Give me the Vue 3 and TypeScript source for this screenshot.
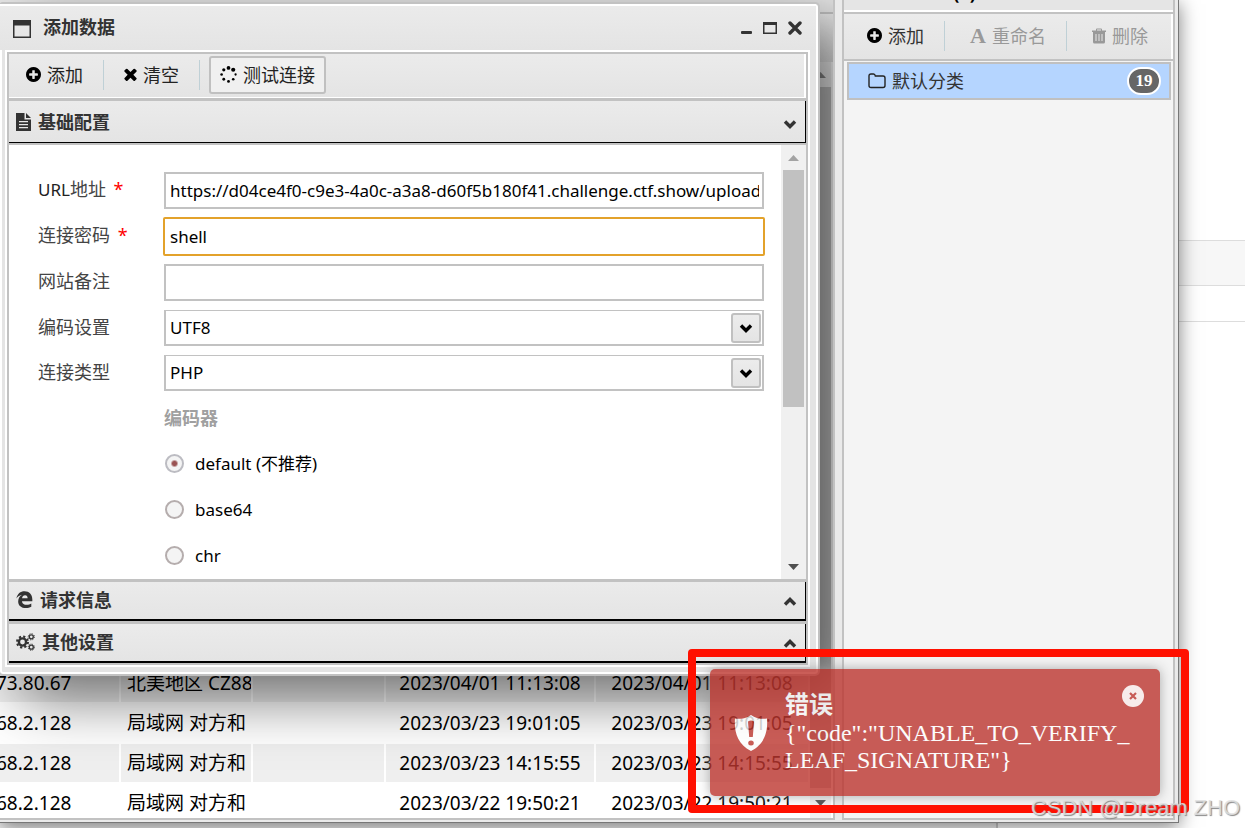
<script setup lang="ts">
import { ref } from 'vue'

interface ShellRow {
  ip: string
  place: string
  created: string
  updated: string
}

const blankRows = 15
const rows: ShellRow[] = [
  { ip: '73.80.67', place: '北美地区 CZ88', created: '2023/04/01 11:13:08', updated: '2023/04/01 11:13:08' },
  { ip: '68.2.128', place: '局域网 对方和', created: '2023/03/23 19:01:05', updated: '2023/03/23 19:01:05' },
  { ip: '68.2.128', place: '局域网 对方和', created: '2023/03/23 14:15:55', updated: '2023/03/23 14:15:55' },
  { ip: '68.2.128', place: '局域网 对方和', created: '2023/03/22 19:50:21', updated: '2023/03/22 19:50:21' },
]

const url = ref('https://d04ce4f0-c9e3-4a0c-a3a8-d60f5b180f41.challenge.ctf.show/upload')
const password = ref('shell')
const note = ref('')
const charset = ref('UTF8')
const kind = ref('PHP')
const encoder = ref('default')
const encoders = [
  { value: 'default', label: 'default (不推荐)' },
  { value: 'base64', label: 'base64' },
  { value: 'chr', label: 'chr' },
]
</script>

<template>
  <div class="page">
    <div class="behind">
      <div class="band"></div>
      <div class="rule"></div>
      <div class="foot"></div>
    </div>

    <div class="app">
      <section class="left">
        <div class="left-top"></div>
        <div class="grid-head"></div>
        <div class="grid-body">
          <table class="grid">
            <colgroup>
              <col class="c1" /><col class="c2" /><col class="c3" /><col class="c4" /><col class="c5" />
            </colgroup>
            <tbody>
              <tr v-for="n in blankRows" :key="'b' + n"><td></td><td></td><td></td><td></td><td></td></tr>
              <tr v-for="(r, i) in rows" :key="i">
                <td class="ip">{{ r.ip }}</td>
                <td class="place">{{ r.place }}</td>
                <td></td>
                <td class="date">{{ r.created }}</td>
                <td class="date">{{ r.updated }}</td>
              </tr>
            </tbody>
          </table>
          <div class="scroll outer">
            <svg class="arrow" viewBox="0 0 11 6"><path d="M0 6L5.500 0L11 6z" fill="#8a8a8a" /></svg>
            <div class="thumb"></div>
            <svg class="arrow" viewBox="0 0 11 6"><path d="M0 0L5.500 6L11 0z" fill="#505050" /></svg>
          </div>
        </div>

        <div class="dialog" role="dialog" aria-label="添加数据">
          <header class="dlg-head">
            <svg class="i-win" viewBox="0 0 18 18"><path d="M0 0H18V18H0zM1.500 5.500V16.500H16.500V5.500z" fill="#333" fill-rule="evenodd" /></svg>
            <h1>添加数据</h1>
            <div class="win-btns">
              <button type="button" aria-label="最小化"><svg width="11" height="14" viewBox="0 0 11 14"><rect y="10" width="11" height="3" rx="1" fill="#333" /></svg></button>
              <button type="button" aria-label="最大化"><svg width="14" height="14" viewBox="0 0 14 14"><path d="M0 1H14V13H0zM1.500 4V11.500H12.500V4z" fill="#333" fill-rule="evenodd" /></svg></button>
              <button type="button" aria-label="关闭"><svg width="14" height="14" viewBox="0 0 14 14"><path d="M2 2L12 12M12 2L2 12" stroke="#333" stroke-width="3.400" stroke-linecap="round" /></svg></button>
            </div>
          </header>

          <div class="dlg-body">
            <div class="toolbar">
              <button type="button" class="tb add">
                <svg class="i16" viewBox="128 128 1536 1536"><path d="M1344 960v-128q0-26-19-45t-45-19h-256v-256q0-26-19-45t-45-19h-128q-26 0-45 19t-19 45v256h-256q-26 0-45 19t-19 45v128q0 26 19 45t45 19h256v256q0 26 19 45t45 19h128q26 0 45-19t19-45v-256h256q26 0 45-19t19-45zm320-64q0 209-103 385.500t-279.500 279.500-385.500 103-385.500-103-279.500-279.500-103-385.500 103-385.500 279.500-279.500 385.500-103 385.500 103 279.500 279.500 103 385.500z" /></svg>
                添加
              </button>
              <span class="sep"></span>
              <button type="button" class="tb clear">
                <svg class="i14" viewBox="302 302 1188 1252"><path d="M1490 1322q0 40-28 68l-136 136q-28 28-68 28t-68-28l-294-294-294 294q-28 28-68 28t-68-28l-136-136q-28-28-28-68t28-68l294-294-294-294q-28-28-28-68t28-68l136-136q28-28 68-28t68 28l294 294 294-294q28-28 68-28t68 28l136 136q28 28 28 68t-28 68l-294 294 294 294q28 28 28 68z" /></svg>
                清空
              </button>
              <span class="sep"></span>
              <button type="button" class="tb test">
                <svg class="i18" viewBox="0 0 18 18">
                  <circle cx="9" cy="2" r="2" /><circle cx="14" cy="4" r="2.200" /><circle cx="16.500" cy="9" r="1.200" /><circle cx="14" cy="14" r="1.400" />
                  <circle cx="9" cy="16.300" r="1.500" /><circle cx="4" cy="14" r="1.500" /><circle cx="1.700" cy="9" r="1.400" /><circle cx="4" cy="4" r="1.700" />
                </svg>
                测试连接
              </button>
            </div>

            <div class="fold first">
              <svg class="i-file" viewBox="0 0 15 18"><path d="M0 0H8.500V6.500H15V18H0zM10 0L15 5H10zM3 8V9.300H12V8zM3 11V12.300H12V11zM3 14V15.300H12V14z" fill="#333" fill-rule="evenodd" /></svg>
              <h2>基础配置</h2>
              <svg class="chev" viewBox="0 0 14 10"><path d="M2 2.500L7 7.500L12 2.500" /></svg>
            </div>

            <div class="content">
              <form class="form" @submit.prevent>
                <div class="row">
                  <label for="url"><span class="latin">URL</span>地址 <b>*</b></label>
                  <input id="url" v-model="url" type="text" class="text" spellcheck="false" />
                </div>
                <div class="row">
                  <label for="pwd">连接密码 <b>*</b></label>
                  <input id="pwd" v-model="password" type="text" class="text active" spellcheck="false" />
                </div>
                <div class="row">
                  <label for="note">网站备注</label>
                  <input id="note" v-model="note" type="text" class="text" />
                </div>
                <div class="row short">
                  <label for="charset">编码设置</label>
                  <div class="combo">
                    <select id="charset" v-model="charset"><option>UTF8</option></select>
                    <span class="drop"><svg class="chev" viewBox="0 0 14 10"><path d="M2 2.500L7 7.500L12 2.500" /></svg></span>
                  </div>
                </div>
                <div class="row short">
                  <label for="kind">连接类型</label>
                  <div class="combo">
                    <select id="kind" v-model="kind"><option>PHP</option></select>
                    <span class="drop"><svg class="chev" viewBox="0 0 14 10"><path d="M2 2.500L7 7.500L12 2.500" /></svg></span>
                  </div>
                </div>
                <fieldset>
                  <legend>编码器</legend>
                  <label v-for="e in encoders" :key="e.value" class="radio">
                    <input v-model="encoder" type="radio" name="encoder" :value="e.value" />
                    {{ e.label }}
                  </label>
                </fieldset>
              </form>
              <div class="scroll inner">
                <svg class="arrow" viewBox="0 0 11 6"><path d="M0 6L5.500 0L11 6z" fill="#a3a3a3" /></svg>
                <div class="thumb"></div>
                <svg class="arrow end" viewBox="0 0 11 6"><path d="M0 0L5.500 6L11 0z" fill="#505050" /></svg>
              </div>
            </div>

            <div class="fold closed">
              <svg class="i18" viewBox="0 0 18 18"><path d="M0.500 8C1.200 3 4.800 0.300 9 0.300C14 0.300 17.300 3.800 17.300 9V10.800H6.300C6.500 13.500 8.800 14.600 11.300 14.600C13.300 14.600 15 14 16.200 13.200V16.600C14.600 17.500 12.600 18 10.500 18C5.600 18 2.300 15.300 2.300 11C2.300 7.800 4 5.400 6.600 4.100C4 4.400 1.800 5.900 0.500 8zM6.400 7.600H12.300C12.300 5.700 11.400 4.500 9.600 4.500C7.900 4.500 6.700 5.800 6.400 7.600z" fill="#333" fill-rule="evenodd" /></svg>
              <h2>请求信息</h2>
              <svg class="chev" viewBox="0 0 14 10"><path d="M2 7.500L7 2.500L12 7.500" /></svg>
            </div>
            <div class="fold closed">
              <svg class="i-cogs" viewBox="0 0 19 18" fill="none" stroke="#333">
                <circle cx="6.500" cy="9" r="3.600" stroke-width="2.400" /><circle cx="6.500" cy="9" r="5.500" stroke-width="2" stroke-dasharray="2.200 2.120" />
                <circle cx="15.300" cy="3.800" r="2" stroke-width="1.300" /><circle cx="15.300" cy="3.800" r="3.100" stroke-width="1" stroke-dasharray="1.200 1.230" />
                <circle cx="15.300" cy="14.200" r="2" stroke-width="1.300" /><circle cx="15.300" cy="14.200" r="3.100" stroke-width="1" stroke-dasharray="1.200 1.230" />
              </svg>
              <h2>其他设置</h2>
              <svg class="chev" viewBox="0 0 14 10"><path d="M2 7.500L7 2.500L12 7.500" /></svg>
            </div>
          </div>
        </div>
      </section>

      <section class="right">
        <header class="cat-head"><span>(1)</span></header>
        <div class="cat-bar">
          <button type="button" class="tb cat-add">
            <svg class="i16" viewBox="128 128 1536 1536"><path d="M1344 960v-128q0-26-19-45t-45-19h-256v-256q0-26-19-45t-45-19h-128q-26 0-45 19t-19 45v256h-256q-26 0-45 19t-19 45v128q0 26 19 45t45 19h256v256q0 26 19 45t45 19h128q26 0 45-19t19-45v-256h256q26 0 45-19t19-45zm320-64q0 209-103 385.500t-279.500 279.500-385.500 103-385.500-103-279.500-279.500-103-385.500 103-385.500 279.500-279.500 385.500-103 385.500 103 279.500 279.500 103 385.500z" /></svg>
            添加
          </button>
          <span class="sep"></span>
          <button type="button" class="tb cat-name" disabled><span class="font-a">A</span>重命名</button>
          <span class="sep"></span>
          <button type="button" class="tb cat-del" disabled>
            <svg width="14" height="16" viewBox="0 0 14 16"><path d="M4 2.500V1.500Q4 .500 5 .500H9Q10 .500 10 1.500V2.500H14V4H13V14Q13 15.500 11.500 15.500H2.500Q1 15.500 1 14V4H0V2.500zM5 2.500H9V1.500H5zM3.500 6V13H4.500V6zM6.500 6V13H7.500V6zM9.500 6V13H10.500V6z" fill="#999" fill-rule="evenodd" /></svg>
            删除
          </button>
        </div>
        <div class="cat-list">
          <button type="button" class="cat">
            <svg width="18" height="16" viewBox="0 0 18 16"><path d="M1 3Q1 1 3 1H5.500Q7 1 7.300 3H15Q17 3 17 5V12.500Q17 14.500 15 14.500H3Q1 14.500 1 12.500z" fill="none" stroke="#222" stroke-width="1.400" /></svg>
            <span class="cat-label">默认分类</span>
            <span class="badge">19</span>
          </button>
        </div>
      </section>
    </div>

    <div class="toast" role="alert">
      <svg class="shield" viewBox="0 0 34 36"><path d="M17 0C12 3.500 6 4.500 1 3.500C0 16 3 29 17 36C31 29 34 16 33 3.500C28 4.500 22 3.500 17 0zM14 6.500Q17 4.500 20 6.500L18.800 22H15.200zM17 25.500A2.800 2.500 0 1 1 17 30.500A2.800 2.500 0 1 1 17 25.500z" fill="#fff" fill-rule="evenodd" /></svg>
      <div class="toast-text">
        <strong>错误</strong>
        <p>{"code":"UNABLE_TO_VERIFY_<br />LEAF_SIGNATURE"}</p>
      </div>
      <button type="button" class="toast-x" aria-label="关闭提示"><svg width="10" height="10" viewBox="0 0 10 10"><path d="M2 2L8 8M8 2L2 8" stroke="#bd362f" stroke-width="2.200" /></svg></button>
    </div>
    <div class="marker"></div>
    <div class="mark">CSDN @Dream ZHO</div>
  </div>
</template>

<style>
body { margin: 0; background: #fff; }
</style>

<style scoped>
* { box-sizing: border-box; }
.page {
  position: relative;
  height: 100vh;
  overflow: hidden;
  font-family: "Noto Sans", "Noto Sans CJK SC", sans-serif;
  font-size: 18px;
  color: #000;
  display: flex;
  flex-direction: column;
}
button { font: inherit; color: inherit; background: none; border: 0; padding: 0; margin: 0; }
h1, h2, p { margin: 0; font-size: 18px; }
svg { display: block; flex: none; }
.behind { position: absolute; inset: 0; padding-top: 240px; display: flex; flex-direction: column; }
.band { height: 46px; background: #f7f7f7; border: solid #ddd; border-width: 1px 0; }
.rule { height: 36px; border-bottom: 1px solid #ddd; }
.foot { margin: auto 247px 0 0; height: 6px; border-right: 2px solid #ccc; background: #f2f2f2; }

.app {
  position: relative;
  flex: 1;
  min-height: 0;
  margin: 0 66px 5px 0;
  padding: 0 3px 2px 0;
  display: flex;
  gap: 7px;
  background: #eaeaea;
  border: solid #777;
  border-width: 0 1px 1px 0;
  box-shadow: 0 4px 18px rgba(0, 0, 0, .5);
}
.left {
  position: relative;
  flex: 1;
  min-width: 0;
  overflow: hidden;
  display: flex;
  flex-direction: column;
  background: #fff;
  border: solid #c2c2c2;
  border-width: 0 2px 2px 0;
}
.left-top { height: 14px; flex: none; background: #e6e6e6; border-bottom: 2px solid #c2c2c2; }
.grid-head { height: 48px; flex: none; background: linear-gradient(#ebebeb, #e3e3e3); }
.grid-body { flex: 1; min-height: 0; display: flex; overflow: hidden; padding-right: 2px; }
.grid {
  flex: 1;
  width: 100%;
  height: 760px;
  margin-left: -6px;
  table-layout: fixed;
  border-collapse: collapse;
  font-size: 19px;
}
.c1 { width: 125px; }
.c2 { width: 132px; }
.c3 { width: 133px; }
.c4 { width: 210px; }
.grid td {
  height: 40px;
  padding: 0;
  border: 2px solid #fff;
  line-height: 24px;
  white-space: nowrap;
  overflow: hidden;
}
.grid tr:nth-child(even) td { background: #efefef; }
.grid .place { padding-left: 6px; }
.grid .date { text-align: center; }

.scroll { flex: none; display: flex; flex-direction: column; align-items: center; background: #f0f0f0; }
.scroll .thumb { background: #c1c1c1; width: 21px; }
.arrow { width: 11px; height: 6px; }
.outer { width: 21px; padding: 10px 0 12px; }
.outer .thumb { margin: 9px 0 12px; flex: 1; }
.inner { width: 25px; padding: 10px 0 9px; }
.inner .thumb { margin-top: 9px; height: 237px; }
.inner .end { margin-top: auto; }

.dialog {
  position: absolute;
  top: 2px;
  left: -2px;
  right: 13px;
  padding: 0 10px 9px 7px;
  background: #e4e4e4;
  border: 2px solid #c2c2c2;
  border-radius: 5px;
  box-shadow: inset 0 0 0 2px #fff, 22px 22px 60px rgba(0, 0, 0, .55);
}
.dlg-head {
  display: flex;
  align-items: center;
  height: 46px;
  margin: 0 -8px 0 -7px;
  padding: 0 14px 2px 13px;
  border-top: 2px solid #fff;
  background: linear-gradient(#ebebeb, #e4e4e4);
  color: #333;
}
.i-win { width: 18px; height: 18px; margin-top: 4px; }
.dlg-head h1 { margin-left: 12px; line-height: 24px; }
.win-btns { margin: 2px 0 0 auto; display: flex; gap: 11px; }
.dlg-body { border: 2px solid #c2c2c2; outline: 2px solid #fff; margin: 2px 0 0; }
.toolbar {
  display: flex;
  align-items: center;
  height: 44px;
  padding-bottom: 2px;
  background: linear-gradient(#ebebeb, #e4e4e4);
  border: solid #fff;
  border-width: 0 2px 1px 0;
}
.tb { display: flex; align-items: center; gap: 6px; height: 38px; line-height: 24px; white-space: nowrap; color: #222; }
.sep { width: 1px; height: 30px; background: #bfd0d6; flex: none; }
.i18 { width: 17px; height: 17px; }
.i16 { width: 15px; height: 15px; fill: #000; }
.i14 { width: 13px; height: 13px; fill: #000; }
.add { padding: 0 20px 0 17px; }
.clear { padding: 0 20px; }
.test { margin-left: 9px; padding: 0 9px; border: 2px solid #c0c0c0; border-radius: 3px; background: #f0f0f0; }

.fold {
  display: flex;
  align-items: center;
  height: 42px;
  padding: 0 9px 4px 7px;
  color: #333;
  background: linear-gradient(#ebebeb, #e4e4e4);
  border: solid #c2c2c2;
  border-width: 3px 0 0;
  box-shadow: inset -1px -2px #000;
}
.fold.first { height: 45px; padding-bottom: 1px; box-shadow: 0 -1px #fff, inset -1px -1px #000; }
.fold h2 { margin-left: 7px; line-height: 24px; }
.i-file { width: 15px; height: 18px; }
.i-cogs { width: 19px; height: 18px; }
.chev { width: 14px; height: 10px; fill: none; stroke: #333; stroke-width: 3.400; }
.fold .chev { margin: 4px 0 0 auto; }

.content { display: flex; border-top: 2px solid #c2c2c2; background: #fff; }
.form { flex: 1; min-width: 0; padding: 22px 17px 0 29px; }
.row { display: flex; align-items: center; height: 46px; }
.row.short { height: 45px; }
.row > label { width: 126px; flex: none; color: #444; line-height: 24px; padding-bottom: 2px; }
.row .latin { font-size: 17px; color: #222; }
.row label b { color: #f00; font-weight: 400; margin-left: 3px; }
.text {
  flex: 1;
  min-width: 0;
  height: 37px;
  padding: 0 3px 0 4px;
  border: 2px solid #c2c2c2;
  font: 17px "Noto Sans", "Noto Sans CJK SC", sans-serif;
  color: #000;
  background: #fff;
  outline: none;
}
.text.active { border-color: #e3a22b; height: 39px; margin: 0 -1px; padding: 0 4px 0 5px; border-radius: 2px; }
.combo { position: relative; flex: 1; min-width: 0; display: flex; }
.combo select {
  flex: 1;
  height: 36px;
  padding: 0 40px 0 4px;
  appearance: none;
  border: 2px solid #c2c2c2;
  border-top-width: 1px;
  border-radius: 0;
  background: #fff;
  color: #000;
  font: 17px "Noto Sans", "Noto Sans CJK SC", sans-serif;
}
.drop {
  position: absolute;
  top: 3px;
  right: 3px;
  width: 30px;
  height: 30px;
  display: grid;
  place-items: center;
  border: 2px solid #c0c0c0;
  border-radius: 3px;
  background: linear-gradient(#ececec, #e4e4e4);
  pointer-events: none;
}
.drop .chev { stroke: #000; }
fieldset { border: 0; margin: 0 0 0 126px; padding: 0; min-width: 0; }
legend { padding: 0; height: 46px; line-height: 46px; font-weight: 700; color: #a0a0a0; }
.radio { display: flex; align-items: center; height: 46px; font-size: 17px; gap: 10px; line-height: 24px; }
.radio input {
  appearance: none;
  width: 19px;
  height: 19px;
  margin: 0 1px 2px;
  border: 2px solid #b5adad;
  border-radius: 50%;
  background: #f4f4f4;
}
.radio input:checked { border-color: #bcbcc2; background: radial-gradient(circle, #9a5252 0 2px, #f4f4f4 4px); }

.right {
  flex: 0 0 333px;
  display: flex;
  flex-direction: column;
  background: #f4f4f4;
  border: solid #c2c2c2;
  border-width: 0 2px 2px;
}
.cat-head {
  height: 12px;
  overflow: hidden;
  display: flex;
  align-items: flex-end;
  justify-content: center;
  background: #e5e5e5;
  border-bottom: 2px solid #fff;
  font-weight: 700;
  line-height: 24px;
}
.cat-head span { padding-bottom: 5px; margin-right: 88px; }
.cat-bar {
  display: flex;
  align-items: center;
  height: 49px;
  padding-bottom: 2px;
  border: solid #c2c2c2;
  border-width: 2px 0;
  box-shadow: inset -2px 0 #fff;
  background: linear-gradient(#ebebeb, #e4e4e4);
}
.cat-bar .tb { color: #333; }
.cat-bar .tb:disabled { color: #999; }
.cat-add { padding: 0 20px 0 23px; }
.cat-name { padding: 0 20px 0 25px; }
.cat-del { padding-left: 25px; }
.font-a { font: 700 22px "Liberation Serif", serif; }
.cat-list { padding: 1px 2px 0 3px; }
.cat {
  width: 100%;
  height: 38px;
  display: flex;
  align-items: center;
  padding: 0 8px 0 19px;
  background: #b5d5ff;
  border: 2px solid #c0c0c0;
  color: #333;
}
.cat-label { margin-left: 6px; line-height: 24px; }
.badge {
  margin-left: auto;
  width: 34px;
  height: 28px;
  border: 2px solid #fff;
  border-radius: 14px;
  background: #666;
  color: #fff;
  font: 700 17px/24px "Liberation Serif", serif;
  text-align: center;
}

.toast {
  position: absolute;
  right: 85px;
  bottom: 32px;
  width: 450px;
  min-height: 127px;
  padding: 23px 15px 20px 24px;
  display: flex;
  align-items: flex-start;
  border-radius: 5px;
  background: #bd362f;
  color: #fff;
  opacity: .8;
  box-shadow: 0 0 12px #999;
  font: 24px/27px "Liberation Serif", "Noto Sans CJK SC", serif;
}
.toast p { font-size: 24px; }
.toast strong { display: block; height: 28px; }
.shield { width: 34px; height: 36px; margin-top: 23px; }
.toast-text { margin-left: 17px; }
.toast-x { margin: -7px 0 0 -7px; width: 22px; height: 22px; border-radius: 50%; background: #fff; opacity: .9; display: grid; place-items: center; flex: none; }
.marker { position: absolute; right: 56px; bottom: 15px; width: 501px; height: 164px; border: 8px solid #ff1000; border-radius: 4px; pointer-events: none; }
.mark {
  position: absolute;
  right: 5px;
  bottom: 7px;
  font: 22px/26px "Liberation Sans", sans-serif;
  color: rgba(225, 225, 225, .85);
  text-shadow: 1px 1px 1px #888;
}
</style>
